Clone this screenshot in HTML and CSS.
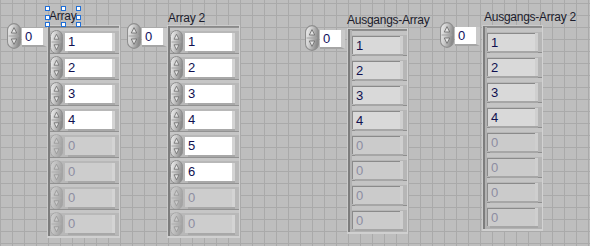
FILE: index.html
```html
<!doctype html>
<html lang="de">
    <head>
        <meta charset="UTF-8" />
        <title>Frontpanel</title>
        <link rel="stylesheet" href="styles.css">
    </head>
    <body>
        <svg class="defs" width="0" height="0">
            <defs>
                <linearGradient id="spinfill" x1="0" y1="0" x2="1" y2="0.3">
                    <stop offset="0" stop-color="#f2f2f2" />
                    <stop offset="0.45" stop-color="#cdcdcd" />
                    <stop offset="1" stop-color="#8c8c8c" />
                </linearGradient>
                <symbol id="spin" viewBox="0 0 13 24">
                    <rect x="0.5" y="0.5" width="12" height="23" rx="6" fill="url(#spinfill)" stroke="#8e8e8e" />
                    <line x1="1.5" y1="12" x2="11.5" y2="12" stroke="#a4a4a4" />
                    <path d="M6.5 4.2 L9 9.2 H4 Z" fill="#e4e4e4" stroke="#6c6c6c" stroke-width="0.8" />
                    <path d="M6.5 19.8 L9 14.8 H4 Z" fill="#e4e4e4" stroke="#6c6c6c" stroke-width="0.8" />
                </symbol>
            </defs>
        </svg>

        <div class="panel">
            <!-- Array -->
            <div class="arr arr-1">
                <div class="label selected">
                    Array
                    <i class="handle h-tl"></i><i class="handle h-tc"></i><i class="handle h-tr"></i>
                    <i class="handle h-ml"></i><i class="handle h-mr"></i>
                    <i class="handle h-bl"></i><i class="handle h-bc"></i><i class="handle h-br"></i>
                </div>
                <div class="index">
                    <svg class="spin-lg"><use href="#spin" /></svg>
                    <div class="ibox">0</div>
                </div>
                <div class="frame ctrl">
                    <div class="cell"><svg class="spin"><use href="#spin" /></svg><div class="num">1</div></div>
                    <div class="cell"><svg class="spin"><use href="#spin" /></svg><div class="num">2</div></div>
                    <div class="cell"><svg class="spin"><use href="#spin" /></svg><div class="num">3</div></div>
                    <div class="cell"><svg class="spin"><use href="#spin" /></svg><div class="num">4</div></div>
                    <div class="cell off"><svg class="spin"><use href="#spin" /></svg><div class="num">0</div></div>
                    <div class="cell off"><svg class="spin"><use href="#spin" /></svg><div class="num">0</div></div>
                    <div class="cell off"><svg class="spin"><use href="#spin" /></svg><div class="num">0</div></div>
                    <div class="cell off"><svg class="spin"><use href="#spin" /></svg><div class="num">0</div></div>
                </div>
            </div>

            <!-- Array 2 -->
            <div class="arr arr-2">
                <div class="label">Array 2</div>
                <div class="index">
                    <svg class="spin-lg"><use href="#spin" /></svg>
                    <div class="ibox">0</div>
                </div>
                <div class="frame ctrl">
                    <div class="cell"><svg class="spin"><use href="#spin" /></svg><div class="num">1</div></div>
                    <div class="cell"><svg class="spin"><use href="#spin" /></svg><div class="num">2</div></div>
                    <div class="cell"><svg class="spin"><use href="#spin" /></svg><div class="num">3</div></div>
                    <div class="cell"><svg class="spin"><use href="#spin" /></svg><div class="num">4</div></div>
                    <div class="cell"><svg class="spin"><use href="#spin" /></svg><div class="num">5</div></div>
                    <div class="cell"><svg class="spin"><use href="#spin" /></svg><div class="num">6</div></div>
                    <div class="cell off"><svg class="spin"><use href="#spin" /></svg><div class="num">0</div></div>
                    <div class="cell off"><svg class="spin"><use href="#spin" /></svg><div class="num">0</div></div>
                </div>
            </div>

            <!-- Ausgangs-Array -->
            <div class="arr out-1">
                <div class="label">Ausgangs-Array</div>
                <div class="index">
                    <svg class="spin-lg"><use href="#spin" /></svg>
                    <div class="ibox">0</div>
                </div>
                <div class="frame ind">
                    <div class="cell"><div class="num">1</div></div>
                    <div class="cell"><div class="num">2</div></div>
                    <div class="cell"><div class="num">3</div></div>
                    <div class="cell"><div class="num">4</div></div>
                    <div class="cell off"><div class="num">0</div></div>
                    <div class="cell off"><div class="num">0</div></div>
                    <div class="cell off"><div class="num">0</div></div>
                    <div class="cell off"><div class="num">0</div></div>
                </div>
            </div>

            <!-- Ausgangs-Array 2 -->
            <div class="arr out-2">
                <div class="label">Ausgangs-Array 2</div>
                <div class="index">
                    <svg class="spin-lg"><use href="#spin" /></svg>
                    <div class="ibox">0</div>
                </div>
                <div class="frame ind">
                    <div class="cell"><div class="num">1</div></div>
                    <div class="cell"><div class="num">2</div></div>
                    <div class="cell"><div class="num">3</div></div>
                    <div class="cell"><div class="num">4</div></div>
                    <div class="cell off"><div class="num">0</div></div>
                    <div class="cell off"><div class="num">0</div></div>
                    <div class="cell off"><div class="num">0</div></div>
                    <div class="cell off"><div class="num">0</div></div>
                </div>
            </div>
        </div>
    </body>
</html>
```

FILE: styles.css
```css
body {
    margin: 0;
    font-family: "Liberation Sans", Arial, sans-serif;
    font-size: 12px;
    color: #14143c;
}
.defs {
    position: absolute;
}
.panel {
    position: relative;
    width: 590px;
    height: 246px;
    overflow: hidden;
    background-color: #bebebe;
    background-image: linear-gradient(#aaaaaa 1px, transparent 1px),
        linear-gradient(90deg, #aaaaaa 1px, transparent 1px);
    background-size: 12px 12px;
    background-position: 0 3px;
}

/* one array control on the panel canvas */
.arr {
    position: absolute;
    display: grid;
    grid-template-columns: auto auto;
    grid-template-areas:
        ". label"
        "index frame";
    align-items: start;
}
.arr-1 {
    left: 7px;
    top: 9px;
}
.arr-2 {
    left: 127px;
    top: 11px;
}
.out-1 {
    left: 305px;
    top: 13px;
}
.out-2 {
    left: 440px;
    top: 10px;
}

.label {
    grid-area: label;
    justify-self: start;
    height: 14px;
    line-height: 14px;
    margin-bottom: 0;
    padding-left: 1px;
    letter-spacing: -0.25px;
    white-space: nowrap;
    color: #1c1c2c;
}
.out-1 .label {
    margin-bottom: 1px;
    padding-left: 0;
}
.out-2 .label {
    margin-bottom: 1px;
    padding-left: 2px;
}
.label.selected {
    position: relative;
    height: 15px;
    line-height: 15px;
    margin: 0 0 1px 1px;
    padding: 0 2px 0 1px;
}
.handle {
    position: absolute;
    width: 3px;
    height: 3px;
    background: #fff;
    border: 1px solid #1f6fd8;
}
.h-tl, .h-ml, .h-bl { left: -3px; }
.h-tc, .h-bc { left: calc(50% - 2px); }
.h-tr, .h-mr, .h-br { right: -3px; }
.h-tl, .h-tc, .h-tr { top: -3px; }
.h-ml, .h-mr { top: calc(50% - 2px); }
.h-bl, .h-bc, .h-br { bottom: -3px; }

/* index display */
.index {
    grid-area: index;
    display: flex;
    align-items: center;
    gap: 1px;
    margin-top: -2px;
}
.out-1 .index,
.out-2 .index {
    margin-top: -3px;
    margin-right: 2px;
}
.spin-lg {
    width: 14px;
    height: 26px;
}
.ibox {
    width: 18px;
    height: 17px;
    margin-top: 2px;
    padding-left: 3px;
    line-height: 17px;
    font-size: 13px;
    background: #fff;
    border-right: 4px solid #c9c9c9;
    border-bottom: 2px solid #a5a5a5;
    color: #101060;
}

/* array frame */
.frame {
    grid-area: frame;
    box-sizing: border-box;
    background: #b2b2b2;
    border: 1px solid #cccccc;
    border-right-color: #d2d2d2;
    border-bottom: 2px solid #d0d0d0;
    box-shadow: inset 2px 0 0 #7d7d7d, inset 0 1px 0 #8a8a8a;
}
.frame.ctrl {
    width: 73px;
    padding: 1px 0 1px 2px;
}
.frame.ind {
    width: 61px;
    padding: 1px 0 2px 4px;
}

.cell {
    box-sizing: border-box;
    display: flex;
    align-items: center;
    gap: 2px;
    background: linear-gradient(#929292 0, #929292 1px, #c6c6c6 1px, #c6c6c6 4px, #b8b8b8 4px);
}
.ctrl .cell {
    height: 26px;
    padding-top: 4px;
}
.ind .cell {
    height: 25px;
    padding-top: 5px;
    background: linear-gradient(#8e8e8e 0, #8e8e8e 1px, #c4c4c4 1px, #c4c4c4 5px, #b6b6b6 5px);
}
.spin {
    width: 13px;
    height: 24px;
}
.num {
    box-sizing: border-box;
    height: 18px;
    line-height: 18px;
    padding-left: 3px;
    font-size: 13px;
    color: #101050;
}
.ctrl .num {
    width: 47px;
    background: #fff;
    box-shadow: 3px 0 0 #d4d4d4, 3px 2px 0 #a8a8a8;
}
.ind .num {
    width: 48px;
    background: #d9d9d9;
    border-top: 1px solid #8a8a8a;
    border-left: 1px solid #8a8a8a;
    box-shadow: 3px 0 0 #cfcfcf, 3px 2px 0 #a6a6a6;
}

/* elements beyond the array length */
.cell.off .spin {
    opacity: 0.45;
}
.ctrl .cell.off .num {
    background: #cdcdcd;
    color: #8d8da2;
}
.ind .cell.off .num {
    background: #cbcbcb;
    color: #8d8da2;
}
```
